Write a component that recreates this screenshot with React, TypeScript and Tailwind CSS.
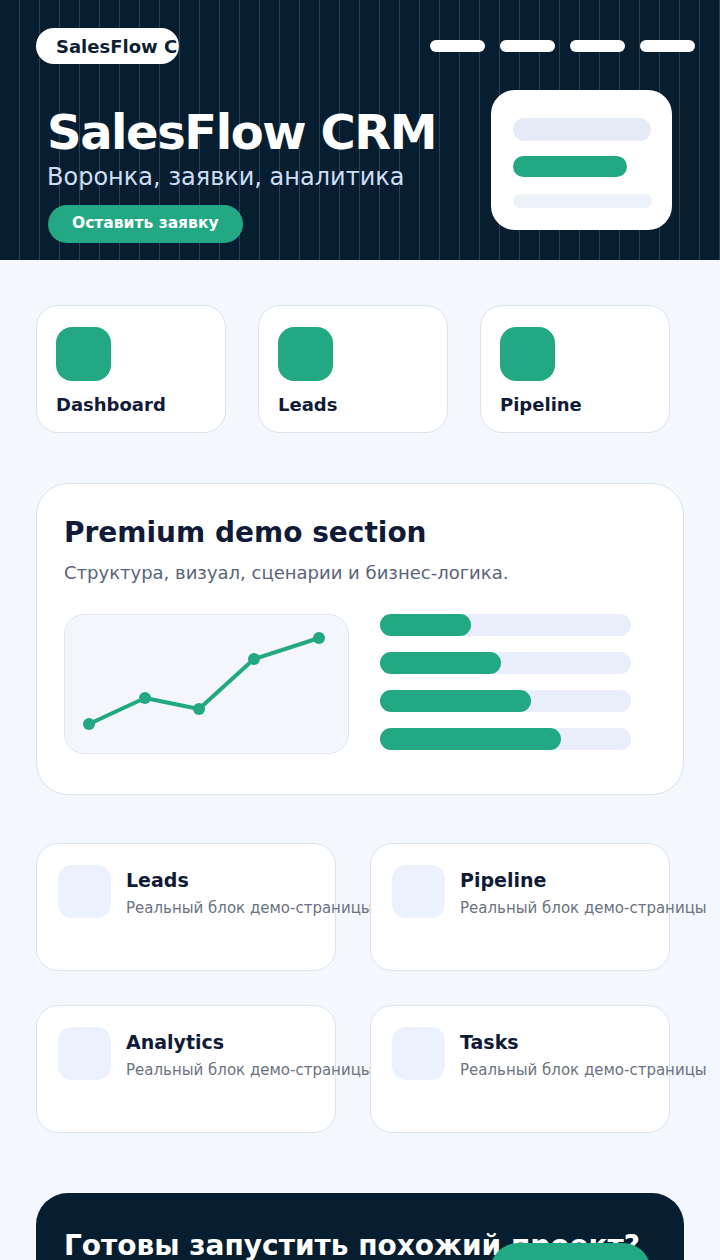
const features = ["Dashboard", "Leads", "Pipeline"];
const modules = ["Leads", "Pipeline", "Analytics", "Tasks"];
const bars = [91, 121, 151, 181];

function Chart() {
  const pts = [
    [24, 109],
    [80, 83],
    [134, 94],
    [189, 44],
    [254, 23],
  ];
  return (
    <svg width="285" height="140" viewBox="0 0 285 140" className="block">
      <polyline
        points={pts.map((p) => p.join(",")).join(" ")}
        fill="none"
        stroke="#22a883"
        strokeWidth="4"
        strokeLinejoin="round"
      />
      {pts.map(([x, y]) => (
        <circle key={x} cx={x} cy={y} r="6" fill="#22a883" />
      ))}
    </svg>
  );
}

export default function App() {
  return (
    <div className="min-h-screen bg-[#f4f7fd] font-['DejaVu_Sans',sans-serif] text-[#111a36]">
      {/* hero */}
      <header className="h-[260px] bg-[#071d30] bg-[linear-gradient(90deg,transparent_19px,rgba(148,163,184,0.25)_19px)] bg-[length:20px_100%] pt-7">
        <div className="flex items-center justify-between pl-9 pr-[25px]">
          <div className="w-[143px] h-9 rounded-full bg-white overflow-hidden whitespace-nowrap pl-5 flex items-center text-[18px] font-bold text-[#0f1f33]">
            SalesFlow CRM
          </div>
          <nav className="flex gap-[15px]">
            {[0, 1, 2, 3].map((i) => (
              <span key={i} className="block w-[55px] h-3 rounded-full bg-white" />
            ))}
          </nav>
        </div>

        <div className="flex justify-between items-start pl-[47px] pr-12 mt-[26px]">
          <div className="pt-[14px]">
            <h1 className="text-[48px] leading-[56px] font-bold text-white tracking-[-0.03em]">SalesFlow CRM</h1>
            <p className="mt-1 text-[24px] leading-[27px] text-[#cddff6]">Воронка, заявки, аналитика</p>
            <button className="mt-[14px] ml-px h-[38px] px-6 rounded-full bg-[#22a883] text-white font-bold text-[15.5px]">
              Оставить заявку
            </button>
          </div>
          <div className="w-[181px] h-[140px] rounded-[24px] bg-white pt-7 px-[22px]">
            <div className="h-[23px] w-[138px] rounded-full bg-[#e6ebf8]" />
            <div className="mt-[15px] h-[21px] w-[114px] rounded-full bg-[#22a883]" />
            <div className="mt-[17px] h-[14px] w-[139px] rounded-full bg-[#edf1f8]" />
          </div>
        </div>
      </header>

      {/* features */}
      <section className="px-9 pt-[45px] grid grid-cols-[190px_190px_190px] gap-8">
        {features.map((f) => (
          <div key={f} className="h-32 rounded-[22px] bg-white border border-[#dbe3ef] pt-[21px] px-[19px]">
            <div className="w-[55px] h-[54px] rounded-2xl bg-[#22a883]" />
            <div className="mt-3 text-[18px] leading-6 font-bold">{f}</div>
          </div>
        ))}
      </section>

      {/* premium */}
      <section className="px-9 pt-[50px]">
        <div className="rounded-[32px] bg-white border border-[#dbe3ef] pt-8 pb-10 px-[27px]">
          <h2 className="text-[28px] leading-[34px] font-bold">Premium demo section</h2>
          <p className="mt-[11px] text-[18px] leading-6 text-[#5a6479]">
            Структура, визуал, сценарии и бизнес-логика.
          </p>
          <div className="mt-[29px] flex gap-[31px]">
            <div className="w-[285px] h-[140px] rounded-[20px] bg-[#f3f6fc] border border-[#e1e7f2] overflow-hidden">
              <Chart />
            </div>
            <div className="flex flex-col gap-4">
              {bars.map((w) => (
                <div key={w} className="w-[251px] h-[22px] rounded-full bg-[#e9eefa]">
                  <div className="h-full rounded-full bg-[#22a883]" style={{ width: w }} />
                </div>
              ))}
            </div>
          </div>
        </div>
      </section>

      {/* modules */}
      <section className="px-9 pt-12 grid grid-cols-[300px_300px] gap-[34px]">
        {modules.map((m) => (
          <div key={m} className="h-32 rounded-[22px] bg-white border border-[#dbe3ef] pt-[21px] pl-[21px] flex gap-[15px]">
            <div className="w-[53px] h-[53px] shrink-0 rounded-[14px] bg-[#ebf2fe]" />
            <div className="pt-[3px] whitespace-nowrap">
              <div className="text-[19px] leading-6 font-bold">{m}</div>
              <div className="mt-[6px] text-[15px] leading-5 text-[#6b7280]">Реальный блок демо-страницы</div>
            </div>
          </div>
        ))}
      </section>

      {/* cta */}
      <section className="px-9 pt-[60px] pb-10">
        <div className="rounded-[32px] bg-[#071d30] pt-9 pb-9 pl-7 pr-[33px] flex items-start">
          <h2 className="flex-1 min-w-0 whitespace-nowrap text-[28px] leading-[34px] font-bold text-white">
            Готовы запустить похожий проект?
          </h2>
          <button className="relative shrink-0 mt-[14px] w-[161px] h-[56px] rounded-full bg-[#22a883] text-white font-bold text-[16px]">
            Консультация
          </button>
        </div>
      </section>
    </div>
  );
}
